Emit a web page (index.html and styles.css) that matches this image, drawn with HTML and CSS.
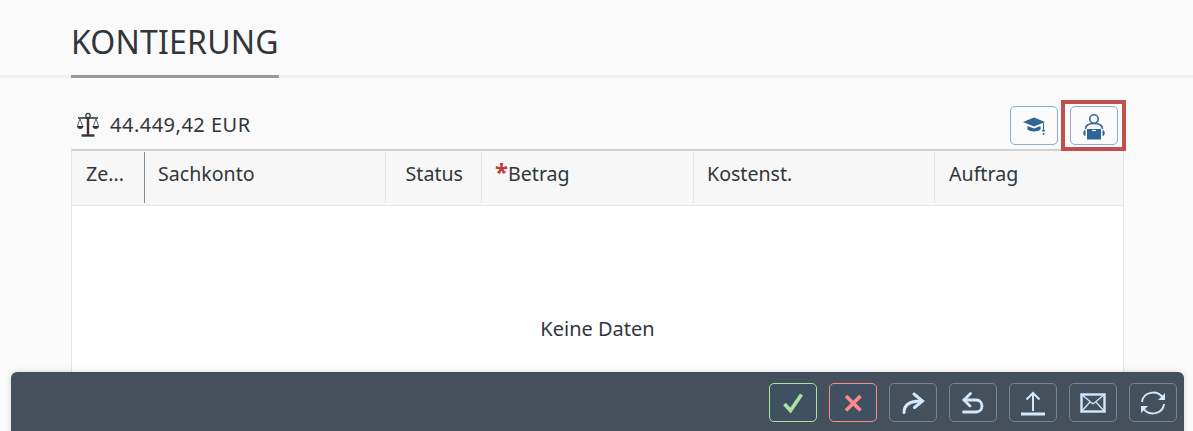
FILE: index.html
```html
<!DOCTYPE html>
<html lang="de">
<head>
  <meta charset="UTF-8" />
  <title>Kontierung</title>
  <link rel="stylesheet" href="styles.css">
</head>
<body>
  <header class="section-head">
    <h2 class="section-title">KONTIERUNG</h2>
  </header>

  <main class="content">
    <div class="toolbar">
      <div class="balance">
        <svg class="balance-icon" viewBox="0 0 24 26" width="24" height="26">
          <circle cx="12" cy="3.500" r="2.200" fill="none" stroke="#32363a" stroke-width="1.300"/>
          <path d="M12 6v17" fill="none" stroke="#4a2a22" stroke-width="2.400"/>
          <path d="M5.500 23.500h13" fill="none" stroke="#32363a" stroke-width="2.400"/>
          <path d="M2 6h20" fill="none" stroke="#32363a" stroke-width="1.600"/>
          <path d="M4 6.500 1.500 14M4 6.500 6.500 14M20 6.500 17.500 14M20 6.500 22.500 14" fill="none" stroke="#5b6670" stroke-width="1"/>
          <path d="M1 14h6.500c0 4-6.500 4-6.500 0zM16.500 14H23c0 4-6.500 4-6.500 0z" fill="#32363a"/>
        </svg>
        <span class="balance-value">44.449,42 EUR</span>
      </div>
      <div class="toolbar-actions">
        <button class="btn-light" type="button" title="Schulung">
          <svg viewBox="0 0 24 20" width="24" height="20">
            <path d="M1 6 12 1.500 23 6 12 10.500z" fill="#2f6497"/>
            <path d="M5.500 10v3.500c2 2.500 11 2.500 13 0V10L12 12.500z" fill="#2f6497"/>
            <path d="M21.500 7v6" stroke="#2f6497" stroke-width="1" fill="none"/>
            <circle cx="21.500" cy="14.500" r="1.300" fill="#2f6497"/>
            <circle cx="21.500" cy="18" r="1" fill="#2f6497"/>
          </svg>
        </button>
        <div class="highlight">
          <button class="btn-light" type="button" title="Benutzer">
            <svg viewBox="0 0 24 28" width="24" height="28">
              <circle cx="12" cy="7" r="4.200" fill="none" stroke="#2f6497" stroke-width="1.600"/>
              <path d="M3.500 17c0-4 3.500-5.500 8.500-5.500s8.500 1.500 8.500 5.500" fill="none" stroke="#2f6497" stroke-width="1.600"/>
              <path d="M5 17h14v10.500H5z" fill="#2f6497"/>
              <path d="M3.500 18c-3 0-3 6 0 6zM20.500 18c3 0 3 6 0 6z" fill="#2f6497"/>
              <path d="M10 18.500h4" stroke="#fff" stroke-width="1.200"/>
            </svg>
          </button>
        </div>
      </div>
    </div>

    <div class="table-wrap">
      <div class="table-head">
        <div class="col col-first">Ze...</div>
        <div class="col">Sachkonto</div>
        <div class="col col-center">Status</div>
        <div class="col"><span class="req">*</span>Betrag</div>
        <div class="col">Kostenst.</div>
        <div class="col">Auftrag</div>
      </div>
      <div class="table-empty">Keine Daten</div>
    </div>
  </main>

  <footer class="action-bar">
    <button class="btn-dark btn-accept" type="button" title="Genehmigen">
      <svg viewBox="0 0 24 24" width="24" height="24"><path d="M3.500 13 9.500 19.500 20.500 3.500" fill="none" stroke="#abe2a1" stroke-width="3.600"/></svg>
    </button>
    <button class="btn-dark btn-reject" type="button" title="Ablehnen">
      <svg viewBox="0 0 24 24" width="24" height="24"><path d="M5 5l14.500 14.500M19.500 5 5 19.500" fill="none" stroke="#ff8888" stroke-width="3.600"/></svg>
    </button>
    <button class="btn-dark" type="button" title="Weiterleiten">
      <svg viewBox="0 0 24 24" width="24" height="24"><path d="M3 21.500C3 14 8 10 20 10" fill="none" stroke="#d1e8ff" stroke-width="3" stroke-linecap="round"/><path d="M13 3l8.500 7-8 6.500" fill="none" stroke="#d1e8ff" stroke-width="3" stroke-linecap="round"/></svg>
    </button>
    <button class="btn-dark" type="button" title="Zurück">
      <svg viewBox="0 0 24 24" width="24" height="24"><path d="M9.500 2.500 3 9l6 6" fill="none" stroke="#d1e8ff" stroke-width="2.800" stroke-linecap="round"/><path d="M3 9h12c8 0 8 12 0 12H2.500" fill="none" stroke="#d1e8ff" stroke-width="2.800" stroke-linecap="round"/></svg>
    </button>
    <button class="btn-dark" type="button" title="Hochladen">
      <svg viewBox="0 0 26 26" width="26" height="26"><path d="M13 3v18" stroke="#d1e8ff" stroke-width="2"/><path d="M6.500 9.500 13 3l6.500 6.500" fill="none" stroke="#d1e8ff" stroke-width="2"/><path d="M1 24h24" stroke="#d1e8ff" stroke-width="3"/></svg>
    </button>
    <button class="btn-dark" type="button" title="E-Mail">
      <svg viewBox="0 0 26 20" width="26" height="20"><rect x="1.500" y="1.500" width="23" height="17" fill="none" stroke="#d1e8ff" stroke-width="2.400"/><path d="M1 1l12 10L25 1M1 19l9-10M25 19l-9-10" fill="none" stroke="#d1e8ff" stroke-width="1.300"/></svg>
    </button>
    <button class="btn-dark" type="button" title="Aktualisieren">
      <svg viewBox="0 0 26 26" width="26" height="26"><path d="M2 12C3 2 17-1 23 8" fill="none" stroke="#d1e8ff" stroke-width="2"/><path d="M24 14c-1 10-15 13-21 4" fill="none" stroke="#d1e8ff" stroke-width="2"/><path d="M25 3v7h-7zM1 23v-7h7z" fill="#d1e8ff"/></svg>
    </button>
  </footer>
</body>
</html>
```

FILE: styles.css
```css
:root {
  --text-color: #32363a;
  --bg-color: #fafafa;
  --line-color: #e5e5e5;
  --bar-color: #44505c;
}
* { box-sizing: border-box; }
html, body { height: 100%; }
body {
  margin: 0;
  overflow: hidden;
  position: relative;
  font-family: "Noto Sans", "Open Sans", sans-serif;
  background-color: var(--bg-color);
  color: var(--text-color);
}
.section-head {
  height: 78px;
  padding: 0 71px;
  border-bottom: 3px solid #f2f2f2;
}
.section-title {
  display: inline-block;
  height: 78px;
  margin: 0;
  padding: 21px 0 0;
  font-size: 32px;
  line-height: 42px;
  letter-spacing: 0.2px;
  font-weight: 400;
  border-bottom: 3px solid #999;
}
.content { padding: 22px 69px 0 71px; }
.toolbar {
  display: flex;
  justify-content: space-between;
  align-items: flex-start;
  height: 49px;
}
.balance {
  display: flex;
  align-items: center;
  gap: 10px;
  height: 49px;
  padding-left: 5px;
  font-size: 20px;
}
.balance-value { letter-spacing: 0.5px; }
.toolbar-actions {
  display: flex;
  align-items: flex-start;
  margin-right: -2px;
}
.toolbar-actions > .btn-light { margin: 6px 3px 0 0; }
.highlight {
  width: 65px;
  height: 51px;
  padding: 2px 5px;
  border: 4px solid #c0504f;
}
button {
  display: flex;
  align-items: center;
  justify-content: center;
  padding: 0;
  width: 48px;
  height: 39px;
  border-radius: 5px;
  cursor: pointer;
}
.btn-light {
  background: #fbfbfb;
  border: 1px solid #8fadc8;
}
.table-wrap {
  height: 300px;
  background: #fff;
  border: 1px solid var(--line-color);
  border-top: 2px solid #d0d0d0;
}
.table-head {
  display: grid;
  grid-template-columns: 73px 241px 96px 212px 241px 1fr;
  height: 55px;
  background: #f7f7f7;
  border-bottom: 1px solid var(--line-color);
  font-size: 19.6px;
}
.col {
  margin: 1px 0 2px;
  padding: 9px 13px 0;
  line-height: 26px;
  border-right: 1px solid var(--line-color);
  white-space: nowrap;
}
.col:last-child { border-right: 0; padding-left: 14px; }
.col-first { padding-left: 14px; border-right-color: #8c8c8c; }
.col-center { padding-right: 18px; text-align: right; }
.req { color: #bb3e3e; font-weight: 700; font-size: 24px; line-height: 20px; }
.table-empty {
  padding-top: 110px;
  text-align: center;
  font-size: 20px;
  line-height: 26px;
}
.action-bar {
  position: absolute;
  left: 11px;
  right: 9px;
  top: 372px;
  height: 70px;
  display: flex;
  justify-content: flex-end;
  gap: 12px;
  padding: 11px 7px 0 0;
  background: var(--bar-color);
  border-radius: 6px;
  box-shadow: 0 0 6px rgba(0,0,0,0.15);
}
.btn-dark {
  background: transparent;
  border: 1px solid #72879b;
}
.btn-accept { background: #3f5161; border-color: #abe2a1; }
.btn-reject { background: #3f5161; border-color: #ff8888; }
```
